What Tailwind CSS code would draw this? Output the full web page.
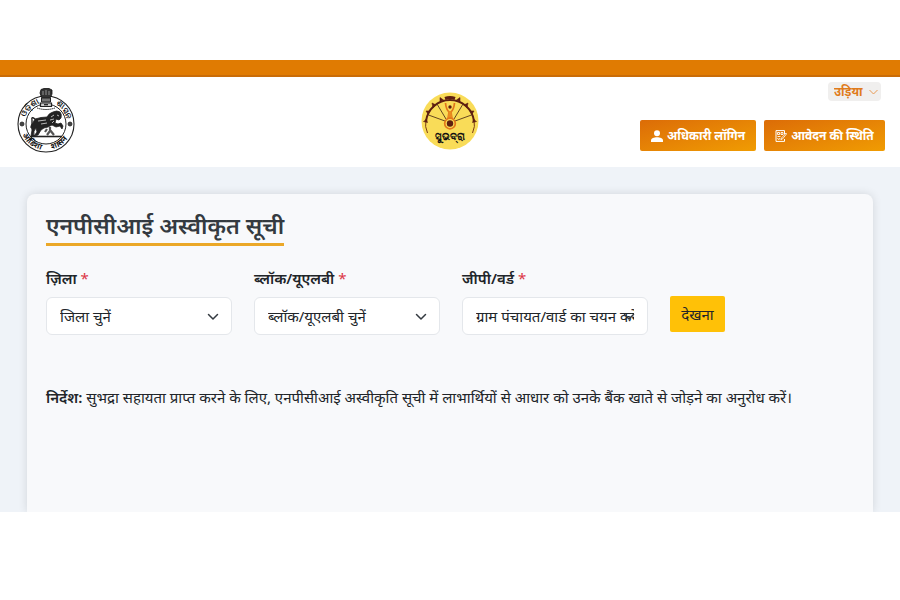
<!DOCTYPE html>
<html lang="hi">
<head>
    <meta charset="UTF-8">
    <meta name="viewport" content="width=device-width, initial-scale=1.0">
    <title>एनपीसीआई अस्वीकृत सूची</title>
    <script src="https://cdn.jsdelivr.net/npm/@tailwindcss/browser@4"></script>
</head>
<body class="min-h-screen flex flex-col bg-white pt-15 pb-22 font-['Noto_Sans','Noto_Sans_Devanagari',sans-serif] text-[#212529]">
    <!-- Top strip -->
    <div class="h-[17px] bg-[#e07b02] border-b-2 border-[#c96c08]"></div>

    <!-- Header -->
    <header class="bg-white h-[90px] px-[15px] grid grid-cols-3">
        <a href="#" class="pt-[10px] justify-self-start" aria-label="Odisha">
            <svg class="w-[62px] h-[68px]" viewBox="0 0 62 68" fill="none" stroke="#222">
                <defs>
                    <path id="ring-left" d="M9.500 37A21.500 21.500 0 0 1 31 15.500"/>
                    <path id="ring-right" d="M31 15.500A21.500 21.500 0 0 1 52.500 37"/>
                    <path id="ring-bottom-left" d="M5 37A26 26 0 0 0 31 63"/>
                    <path id="ring-bottom-right" d="M31 63A26 26 0 0 0 57 37"/>
                </defs>
                <circle cx="31" cy="37" r="28" stroke-width="1.100"/>
                <circle cx="31" cy="37" r="20" stroke-width="1"/>
                <g fill="#111" stroke="none" font-size="8" font-weight="700">
                    <text><textPath href="#ring-left" startOffset="7">ଓଡ଼ିଶା</textPath></text>
                    <text><textPath href="#ring-right" startOffset="10">ଶାସନ</textPath></text>
                    <text><textPath href="#ring-bottom-left" startOffset="11">ओडिशा</textPath></text>
                    <text><textPath href="#ring-bottom-right" startOffset="6">शासन</textPath></text>
                </g>
                <circle cx="7" cy="37" r="2" fill="#444" stroke-width=".8"/>
                <circle cx="55" cy="37" r="2" fill="#444" stroke-width=".8"/>
                <!-- lion capital -->
                <path d="M26 2.500 29 1.500h5l3 1.500v4l-1.500 3.500h-9L25 6z" fill="#333" stroke="#111" stroke-width=".8"/>
                <path d="M28 4v4M31 3v5M34 4v4" stroke="#bbb" stroke-width=".7"/>
                <path d="M26.500 11h9v4h-9z" fill="#777"/>
                <path d="M25.500 16h11v3.500h-11z" fill="#ccc" stroke-width="1.200"/>
                <path d="M29 17.700h4" stroke-width="1.300"/>
                <path d="M22 21q9 3 18 0" stroke-width="1" stroke-dasharray="1.500 .6"/>
                <!-- horse -->
                <path d="M20 32q6-2 12-2 2-4 6-5 4-2 7 0 2 2 1 6l-2 2-3-1-1 4 3 1 3-1 2 3-1 3-2-3-4 1-4-2-4 2-4 1-3 2-3 5-4 1 3-4-1-4q-3 3-2 8h-3l1-6-1-4z" fill="#222" stroke-width=".8"/>
                <path d="M20 32q-4-3-3 1v4l-1 4" stroke-width="1.400"/>
                <path d="M23 34l8-1M36 30l3-2M35 33l4-1M26 37l6-1M42 28l2 1M37 36l2-2" stroke="#ddd" stroke-width=".8"/>
                <path d="M35 40v4l-3 4M35 43l4 5M32 42l-2 3" stroke="#555" stroke-width="2.200"/>
                <path d="M16 49.500h31" stroke-width="1.600"/>
            </svg>
        </a>

        <a href="#" class="pt-[14px] justify-self-center" aria-label="ସୁଭଦ୍ରା">
            <svg class="w-[60px] h-[60px]" viewBox="0 0 60 60" fill="none">
                <circle cx="30" cy="30" r="28.500" fill="#f9dc58"/>
                <path d="M7.500 42Q4.500 36 6 28M52.500 42Q55.500 36 54 28" stroke="#7a3a15" stroke-width="1"/>
                <path d="M6 30A24.200 24.200 0 0 1 54 30" stroke="#5e1f10" stroke-width="2"/>
                <path d="M3.500 30.500l3-2 1 3zM6 20l4 0-2 3zM12 12l4 2-3 2.500zM20 6.500l3.500 2.500-3.500 1.500zM40 6.500l-3.500 2.500 3.500 1.500zM48 12l-4 2 3 2.500zM54 20l-4 0 2 3zM56.500 30.500l-3-2-1 3z" fill="#5e1f10" stroke="#5e1f10" stroke-width=".6"/>
                <path d="M25 7.500Q30 5.500 35 7.500" stroke="#5e1f10" stroke-width="3"/>
                <path d="M25 30 8.500 24M26 28 17 13M35 30 51.500 24M34 28 43 13" stroke="#55351a" stroke-width=".9"/>
                <path d="M25.500 12q.5 6 3.500 9l-1 7h4l-1-7q3-3 3.500-9" stroke="#e2761a" stroke-width="1.700"/>
                <path d="M28.500 20h3l.7 8h-4.400z" fill="#e98b1f"/>
                <circle cx="30" cy="16" r="1.700" fill="#5e1f10"/>
                <circle cx="30" cy="32.500" r="5.300" fill="#f9dc58" stroke="#e2761a" stroke-width="1.700"/>
                <circle cx="30" cy="32.500" r="3.200" fill="#5e1f10"/>
                <text x="30" y="49" text-anchor="middle" font-size="10" font-weight="700" fill="#111">ସୁଭଦ୍ରା</text>
            </svg>
        </a>

        <div class="flex flex-col items-end pt-[5px]">
            <div class="relative mr-1">
                <select aria-label="भाषा" class="appearance-none block h-[19px] w-[53px] rounded bg-[#f0efee] pl-[6px] text-xs leading-[19px] font-bold text-[#e07b1a]">
                    <option>उड़िया</option>
                </select>
                <svg class="absolute right-[3px] top-[7px] w-[9px] h-[6px] pointer-events-none" viewBox="0 0 9 6" fill="none" stroke="#e89a55"><path d="M.5 1 4.500 5 8.500 1"/></svg>
            </div>
            <div class="flex gap-2 mt-[19px]">
                <button class="h-[31px] w-[116px] flex items-center justify-center gap-1 rounded-xs bg-linear-to-br from-[#dc6c07] to-[#f09c02] text-xs font-bold text-white whitespace-nowrap">
                    <svg class="w-3 h-3 shrink-0" viewBox="0 0 12 12" fill="#fff"><circle cx="6" cy="3.200" r="3"/><path d="M0 12V10.500C0 8 3 7.200 6 7.200s6 .8 6 3.300V12z"/></svg>
                    अधिकारी लॉगिन
                </button>
                <button class="h-[31px] w-[121px] flex items-center justify-center gap-1 rounded-xs bg-linear-to-br from-[#dc6c07] to-[#f09c02] text-xs font-bold text-white whitespace-nowrap">
                    <svg class="w-3 h-3 shrink-0" viewBox="0 0 12 12" fill="none" stroke="#fff"><path d="M9.500 4V.6H1v10.800h8.500V9"/><path d="M2.500 2.500h2v2h-2zM6 2.500h2v2H6zM2.500 6.500h3M2.500 8l1 1.500 1.500-1 1 1" stroke-width=".9"/><path d="M11 3 6.500 8l-.5 1.500L7.500 9l4-5z" stroke-width=".8"/></svg>
                    आवेदन की स्थिति
                </button>
            </div>
        </div>
    </header>

    <!-- List form -->
    <main class="flex-1 flex flex-col overflow-hidden bg-[#eff3f8] px-[27px] pt-[27px]">
        <section class="flex-1 rounded-t-lg bg-[#f8f9fb] px-[19px] pt-[15px] shadow-[0_0_10px_rgba(0,0,0,0.12)]">
            <h1 class="inline-block border-b-[3px] border-[#eba828] text-[23px] leading-8 pb-0.5 font-semibold text-[#343a40]">एनपीसीआई अस्वीकृत सूची</h1>

            <form class="mt-5 flex items-start gap-[22px]">
                <div class="w-[186px]">
                    <label for="district" class="block text-[15px] leading-6 font-semibold">ज़िला <span class="font-normal text-[#dc3545]">*</span></label>
                    <div class="relative mt-[7px]">
                        <select id="district" class="appearance-none block w-full h-[38px] rounded-md border border-[#e4e7eb] bg-white px-[13px] text-[15px]">
                            <option>जिला चुनें</option>
                        </select>
                        <svg class="absolute right-[13px] top-4 w-3 h-2 pointer-events-none" viewBox="0 0 12 8" fill="none" stroke="#343a40" stroke-width="1.500" stroke-linecap="round" stroke-linejoin="round"><path d="M1.500 1.500 6 6 10.500 1.500"/></svg>
                    </div>
                </div>
                <div class="w-[186px]">
                    <label for="block" class="block text-[15px] leading-6 font-semibold">ब्लॉक/यूएलबी <span class="font-normal text-[#dc3545]">*</span></label>
                    <div class="relative mt-[7px]">
                        <select id="block" class="appearance-none block w-full h-[38px] rounded-md border border-[#e4e7eb] bg-white px-[13px] text-[15px]">
                            <option>ब्लॉक/यूएलबी चुनें</option>
                        </select>
                        <svg class="absolute right-[13px] top-4 w-3 h-2 pointer-events-none" viewBox="0 0 12 8" fill="none" stroke="#343a40" stroke-width="1.500" stroke-linecap="round" stroke-linejoin="round"><path d="M1.500 1.500 6 6 10.500 1.500"/></svg>
                    </div>
                </div>
                <div class="w-[186px]">
                    <label for="ward" class="block text-[15px] leading-6 font-semibold">जीपी/वर्ड <span class="font-normal text-[#dc3545]">*</span></label>
                    <div class="relative mt-[7px]">
                        <select id="ward" class="appearance-none block w-full h-[38px] rounded-md border border-[#e4e7eb] bg-white px-[13px] text-[15px]">
                            <option>ग्राम पंचायत/वार्ड का चयन करें</option>
                        </select>
                        <svg class="absolute right-[13px] top-4 w-3 h-2 pointer-events-none" viewBox="0 0 12 8" fill="none" stroke="#343a40" stroke-width="1.500" stroke-linecap="round" stroke-linejoin="round"><path d="M1.500 1.500 6 6 10.500 1.500"/></svg>
                    </div>
                </div>
                <button type="button" class="mt-[30px] h-9 w-[55px] rounded-xs bg-[#ffc107] text-[15px]">देखना</button>
            </form>

            <p class="mt-[50px] text-[15px] leading-6"><strong class="font-semibold">निर्देश:</strong> सुभद्रा सहायता प्राप्त करने के लिए, एनपीसीआई अस्वीकृति सूची में लाभार्थियों से आधार को उनके बैंक खाते से जोड़ने का अनुरोध करें।</p>
        </section>
    </main>
</body>
</html>
